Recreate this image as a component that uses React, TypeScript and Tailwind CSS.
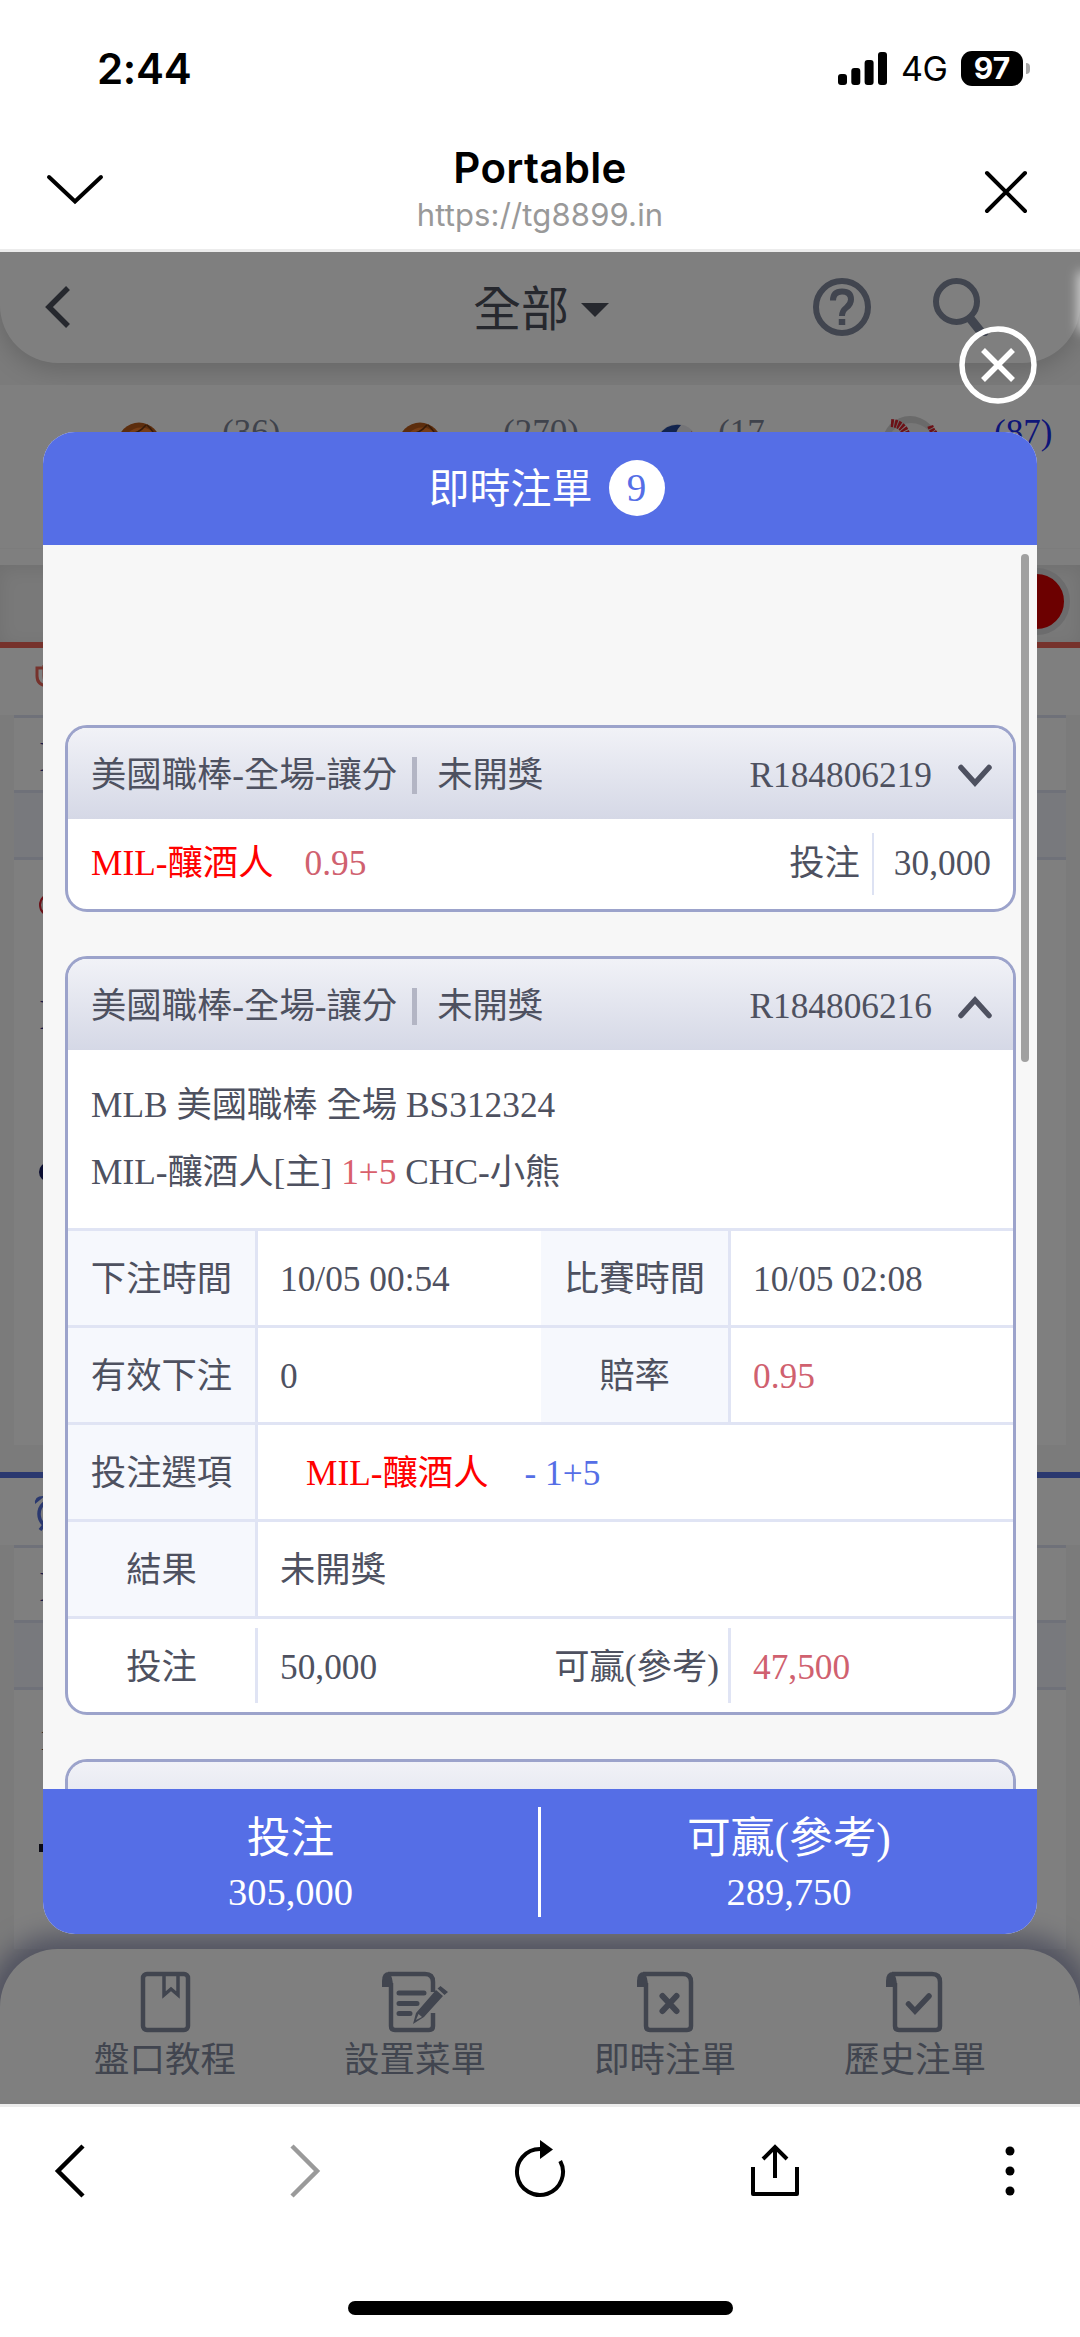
import type { ReactNode } from 'react';
import clsx from 'clsx';

const SERIF = "font-['Liberation_Serif','Noto_Sans_CJK_TC',serif]";
const SANS = "font-['Inter','Noto_Sans_CJK_TC',sans-serif]";

function StatusBar() {
    return (
        <div className="flex h-[137px] items-start justify-between pt-[48px] pr-[50px] pl-[97px]">
            <div className="text-[42px] leading-[42px] font-semibold tracking-[-0.3px]">
                2:44
            </div>
            <div className="flex items-center pt-[3px]">
                <svg className="h-[33px] w-[49px]" viewBox="0 0 49 33">
                    <rect x="0" y="22" width="9" height="11" rx="3" />
                    <rect x="13.3" y="16" width="9" height="17" rx="3" />
                    <rect x="26.6" y="8" width="9" height="25" rx="3" />
                    <rect x="40" y="0" width="9" height="33" rx="3" />
                </svg>
                <span className="ml-[14px] w-[46px] text-[34px] leading-[35px] tracking-[-0.5px]">
                    4G
                </span>
                <div className="ml-[14px] flex h-[35px] w-[62px] items-center justify-center rounded-[11px] bg-black text-[30px] leading-[35px] font-bold text-white">
                    97
                </div>
                <div className="ml-[3px] h-[11px] w-[4px] rounded-r-[4px] bg-[#a8a8a8]" />
            </div>
        </div>
    );
}

function BrowserHeader() {
    return (
        <div className="flex h-[115px] items-start justify-between border-b-[3px] border-[#ececec] px-[45px]">
            <svg
                className="mt-[36px] h-[34px] w-[60px]"
                viewBox="0 0 60 34"
                fill="none"
                stroke="#000"
                strokeWidth="4"
            >
                <path d="M4 4L30 28.500L56 4" strokeLinecap="round" />
            </svg>
            <div className="pt-[7px] text-center">
                <div className="text-[42px] leading-[48px] font-semibold tracking-[0.3px]">
                    Portable
                </div>
                <div className="mt-[6px] text-[31px] leading-[34px] tracking-[0.15px] text-[#999]">
                    https://tg8899.in
                </div>
            </div>
            <svg
                className="mt-[32px] h-[46px] w-[60px]"
                viewBox="0 0 60 46"
                fill="none"
                stroke="#000"
                strokeWidth="4"
                strokeLinecap="round"
            >
                <path d="M12 4L50 42M50 4L12 42" />
            </svg>
        </div>
    );
}

function Basketball() {
    return (
        <svg className="h-[44px] w-[44px]" viewBox="0 0 44 44">
            <circle cx="22" cy="22" r="21.500" fill="#b85a1a" />
            <circle cx="24" cy="24" r="18.500" fill="#ec7a2c" />
            <path
                d="M6 12Q20 14 29 3M30 3Q38 10 40 20"
                fill="none"
                stroke="#6a3410"
                strokeWidth="1.500"
            />
        </svg>
    );
}

function Volleyball() {
    return (
        <svg className="h-[44px] w-[44px]" viewBox="0 0 44 44">
            <circle cx="22" cy="22" r="21" fill="#e8e8ee" />
            <path d="M4 12Q12 0 26 2Q20 8 18 22L2 20Z" fill="#24489c" />
            <path d="M36 8Q44 14 42 28L37 16Z" fill="#d22b34" />
        </svg>
    );
}

function Baseball() {
    return (
        <svg className="h-[56px] w-[56px]" viewBox="0 0 56 56">
            <circle cx="28" cy="28" r="28" fill="#d4d4d4" />
            <circle cx="29" cy="32" r="25" fill="#eee" />
            <path
                d="M9 7Q24 8 25 24"
                fill="none"
                stroke="#d8202c"
                strokeWidth="8"
                strokeDasharray="2.500 1"
            />
            <path
                d="M56 20Q50 16 48 9"
                fill="none"
                stroke="#d8202c"
                strokeWidth="6"
                strokeDasharray="2.500 1"
            />
        </svg>
    );
}

function PageHeader() {
    return (
        <div className="h-[133px] overflow-hidden bg-[#f6f6f6]">
            <div className="flex h-[111px] items-start rounded-b-[58px] bg-white shadow-[0_6px_26px_rgba(0,0,0,0.18)]">
                <svg
                    className="mt-[33px] ml-[42px] h-[44px] w-[30px]"
                    viewBox="0 0 30 44"
                    fill="none"
                    stroke="#4c505c"
                    strokeWidth="5.500"
                >
                    <path d="M26 3L7 22L26 41" />
                </svg>
                <div className="mt-[30px] ml-[401px] flex w-[140px] items-center text-[48px] leading-[56px] text-[#4c505c]">
                    全部
                    <svg className="ml-[12px] h-[14px] w-[28px]" viewBox="0 0 28 14">
                        <path d="M0 0H28L14 14Z" fill="#4c505c" />
                    </svg>
                </div>
                <svg
                    className="mt-[26px] ml-[200px] h-[58px] w-[58px]"
                    viewBox="0 0 58 58"
                    fill="none"
                    stroke="#828a9e"
                >
                    <circle cx="29" cy="29" r="26" strokeWidth="6" />
                    <path
                        d="M20 22.500Q20 13.500 29 13.500Q38 13.500 38 21.500Q38 26 33.500 29.500Q29 33 29 38"
                        strokeWidth="6"
                    />
                    <path d="M29 41V47" strokeWidth="6.500" />
                </svg>
                <svg
                    className="mt-[26px] ml-[62px] h-[58px] w-[58px]"
                    viewBox="0 0 58 58"
                    fill="none"
                    stroke="#828a9e"
                >
                    <circle cx="23.500" cy="23.500" r="20.500" strokeWidth="6" />
                    <path d="M36 39L52 59" strokeWidth="9" />
                </svg>
            </div>
        </div>
    );
}

function SportsRow() {
    return (
        <div className="flex h-[164px] items-start border-b border-[#f9f9f9] bg-white pt-[31px] text-[35px] leading-[34px] text-[#7f8699]">
            <div className="flex w-[398px] pl-[117px]">
                <div className="pt-[6px]">
                    <Basketball />
                </div>
                <span className="ml-[61px]">(36)</span>
            </div>
            <div className="flex w-[257px]">
                <div className="pt-[6px]">
                    <Basketball />
                </div>
                <span className="ml-[61px]">(270)</span>
            </div>
            <div className="flex w-[227px]">
                <div className="pt-[7px]">
                    <Volleyball />
                </div>
                <span className="ml-[19px]">(17</span>
            </div>
            <div className="flex">
                <Baseball />
                <span className="ml-[56px] text-[#1a2bf0]">(87)</span>
            </div>
        </div>
    );
}

function MatchTable({
    className,
    children,
}: {
    className: string;
    children: ReactNode;
}) {
    return (
        <div className={clsx('mx-[14px] bg-white', className)}>
            <div className="h-[78px] border-y-[3px] border-[#dfe2f2] pt-[22px] pl-[25px] text-[42px] leading-[34px] text-[#3a3a90]">
                I
            </div>
            <div className="h-[67px] border-b-[3px] border-[#dfe2f2] bg-[#f0f2fb]" />
            {children}
        </div>
    );
}

function BottomNav() {
    const items: { label: string; icon: ReactNode }[] = [
        {
            label: '盤口教程',
            icon: (
                <svg className="h-[62px] w-[72px]" viewBox="0 0 72 62" fill="none" stroke="currentColor" strokeWidth="4.500">
                    <rect x="14" y="3" width="45" height="56" rx="4" />
                    <path d="M35 4V24L42 18L49 24V4" strokeWidth="3.500" />
                </svg>
            ),
        },
        {
            label: '設置菜單',
            icon: (
                <svg className="h-[62px] w-[72px]" viewBox="0 0 72 62" fill="none" stroke="currentColor" strokeWidth="4.500">
                    <path d="M12 12V55Q12 59 16 59H50Q54 59 54 55V42M54 21V11Q54 3 46 3H9" />
                    <path d="M3 16V10Q3 1 10 1Q14 6 14 16Z" fill="currentColor" stroke="none" />
                    <path d="M20 22H45M20 32.500H38M20 42.500H31" strokeWidth="5" strokeLinecap="round" />
                    <path d="M34 53L37 42L57 19L64 25L45 46ZM58.500 17.500L61.500 15L69 21L65.500 24Z" fill="currentColor" stroke="none" />
                    <path d="M37 49L39.500 43L43 46Z" fill="#fff" stroke="none" />
                </svg>
            ),
        },
        {
            label: '即時注單',
            icon: (
                <svg className="h-[62px] w-[72px]" viewBox="0 0 72 62" fill="none" stroke="currentColor" strokeWidth="4.500">
                    <path d="M17 12V55Q17 59 21 59H58Q62 59 62 55V11Q62 3 54 3H14" />
                    <path d="M8 16V10Q8 1 15 1Q19 6 19 16Z" fill="currentColor" stroke="none" />
                    <path d="M33.500 25L47.500 40M47.500 25L33.500 40" strokeWidth="6" strokeLinecap="round" />
                </svg>
            ),
        },
        {
            label: '歷史注單',
            icon: (
                <svg className="h-[62px] w-[72px]" viewBox="0 0 72 62" fill="none" stroke="currentColor" strokeWidth="4.500">
                    <path d="M16 12V55Q16 59 20 59H57Q61 59 61 55V11Q61 3 53 3H13" />
                    <path d="M7 16V10Q7 1 14 1Q18 6 18 16Z" fill="currentColor" stroke="none" />
                    <path d="M29.500 33L36 40L50 25" strokeWidth="5.500" strokeLinecap="round" />
                </svg>
            ),
        },
    ];

    return (
        <div className="relative flex h-[155px] shrink-0 rounded-t-[58px] bg-white px-[40px] pt-[22px] text-[#828a9e] shadow-[0_0_24px_14px_rgba(80,85,140,0.5)]">
            {items.map((item) => (
                <div key={item.label} className="flex w-[250px] flex-col items-center">
                    {item.icon}
                    <span className="mt-[6px] text-[35.5px] leading-[42px]">
                        {item.label}
                    </span>
                </div>
            ))}
        </div>
    );
}

function SportsPage() {
    return (
        <div className="flex h-full flex-col overflow-hidden bg-[#f6f6f6]">
            <PageHeader />
            <SportsRow />
            <div className="h-[16px] bg-white" />
            <div className="flex h-[77px] justify-end bg-[#f2f2f2] shadow-[inset_0_4px_18px_rgba(0,0,0,0.08)]">
                <div className="mt-[3px] mr-[10px] h-[67px] w-[67px] rounded-full border-[6px] border-[#d8d8da] bg-[#d80000]" />
            </div>
            <div className="h-[6px] shrink-0 bg-[#ec6459]" />
            <div className="flex h-[67px] shrink-0 bg-white pt-[16px] pl-[34px]">
                <svg className="h-[26px] w-[30px]" viewBox="0 0 30 26" fill="none" stroke="#ec6459" strokeWidth="3">
                    <path d="M10 4H3V12Q3 21 13 22M10 1V12Q10 18 14 19" />
                </svg>
            </div>
            <MatchTable className="h-[730px] shrink-0">
                <div className="pt-[33px] pl-[25px]">
                    <div className="h-[24px] w-[24px] rounded-full border-2 border-[#d8202c] bg-[#eee]" />
                    <div className="mt-[77px] text-[42px] leading-[42px] text-[#3a3a90]">I</div>
                    <div className="mt-[126px] h-[20px] w-[20px] rounded-full bg-[#151a60]" />
                </div>
            </MatchTable>
            <div className="h-[27px] shrink-0" />
            <div className="h-[6px] shrink-0 bg-[#5470de]" />
            <div className="flex h-[67px] shrink-0 bg-white pt-[16px] pl-[34px]">
                <svg className="h-[38px] w-[36px]" viewBox="0 0 36 38" fill="none" stroke="#5470de" strokeWidth="3.500">
                    <circle cx="19" cy="20" r="14" />
                    <path d="M11 30L6 36" />
                    <path d="M1 10Q0 1 11 2Z" fill="#5470de" stroke="none" />
                </svg>
            </div>
            <MatchTable className="min-h-0 flex-1">
                <div className="pt-[32px] pl-[25px] text-[32px] leading-[34px] text-[#333]">
                    1
                    <div className="mt-[88px] h-[8px] w-[20px] bg-[#15152a]" />
                </div>
            </MatchTable>
            <BottomNav />
        </div>
    );
}

function TicketHeader({ id, open }: { id: string; open?: boolean }) {
    return (
        <div className="flex h-[91px] items-center bg-linear-to-b from-[#f1f2f7] to-[#d5d8e6] pt-[4px] pr-[21px] pl-[23px]">
            <span>美國職棒-全場-讓分</span>
            <span className="ml-[15px] h-[37px] w-[5px] bg-[#b3b5c4]" />
            <span className="ml-[20px]">未開獎</span>
            <span className="ml-auto">{id}</span>
            <svg
                className={clsx('ml-[26px] h-[26px] w-[34px]', open && 'rotate-180')}
                viewBox="0 0 34 26"
                fill="none"
                stroke="#4e5160"
                strokeWidth="5.500"
            >
                <path d="M3 4.500L17 20L31 4.500" strokeLinecap="round" />
            </svg>
        </div>
    );
}

function Ticket({ children }: { children: ReactNode }) {
    return (
        <div className="shrink-0 overflow-hidden rounded-[22px] border-[3px] border-[#9ca3cb] bg-white">
            {children}
        </div>
    );
}

function Label({ children }: { children: ReactNode }) {
    return (
        <div className="flex w-[190px] shrink-0 items-center justify-center border-r-[3px] border-[#e0e4f4] bg-[#f6f8fd] pt-[4px] whitespace-nowrap">
            {children}
        </div>
    );
}

function Value({ className, children }: { className?: string; children: ReactNode }) {
    return (
        <div className={clsx('flex items-center pt-[4px] pl-[22px]', className)}>
            {children}
        </div>
    );
}

function Row({ children }: { children: ReactNode }) {
    return (
        <div className="flex h-[97px] border-t-[3px] border-[#e0e4f4]">{children}</div>
    );
}

function BetsModal() {
    return (
        <div className="absolute top-[180px] left-[43px] flex h-[1502px] w-[994px] flex-col overflow-hidden rounded-[32px] bg-[#f7f7f7]">
            <div className="flex h-[113px] shrink-0 items-center justify-center bg-[#556ee6] pl-[13px] text-[41px] text-white">
                <span className="pt-[2px]">即時注單</span>
                <span className="mb-[2px] ml-[16px] flex h-[56px] w-[56px] items-center justify-center rounded-full bg-white text-[39px] leading-[56px] text-[#556ee6]">
                    9
                </span>
            </div>

            <div className="relative flex min-h-0 flex-1 flex-col gap-[44px] overflow-hidden pt-[180px] pr-[21px] pl-[22px] text-[35.35px] leading-[48px] text-[#4e5160]">
                <Ticket>
                    <TicketHeader id="R184806219" />
                    <div className="flex h-[90px] items-center pr-[22px] pl-[23px]">
                        <span className="text-[#ff0000]">MIL-釀酒人</span>
                        <span className="ml-[31px] text-[#d0616f]">0.95</span>
                        <span className="ml-auto">投注</span>
                        <span className="ml-[12px] h-[62px] w-[2px] bg-[#dde2f3]" />
                        <span className="ml-[20px]">30,000</span>
                    </div>
                </Ticket>

                <Ticket>
                    <TicketHeader id="R184806216" open />
                    <div className="h-[178px] pt-[22px] pl-[23px] leading-[67px]">
                        <div>MLB 美國職棒 全場 BS312324</div>
                        <div>
                            MIL-釀酒人[主] <span className="text-[#d9606c]">1+5</span> CHC-小熊
                        </div>
                    </div>
                    <Row>
                        <Label>下注時間</Label>
                        <Value className="w-[283px]">10/05 00:54</Value>
                        <Label>比賽時間</Label>
                        <Value>10/05 02:08</Value>
                    </Row>
                    <Row>
                        <Label>有效下注</Label>
                        <Value className="w-[283px]">0</Value>
                        <Label>賠率</Label>
                        <Value className="text-[#d0616f]">0.95</Value>
                    </Row>
                    <Row>
                        <Label>投注選項</Label>
                        <Value>
                            <span className="ml-[26px] text-[#ff0000]">MIL-釀酒人</span>
                            <span className="ml-[36px] text-[#556ee6]">- 1+5</span>
                        </Value>
                    </Row>
                    <Row>
                        <Label>結果</Label>
                        <Value>未開獎</Value>
                    </Row>
                    <div className="flex h-[96px] items-center border-t-[3px] border-[#e0e4f4]">
                        <div className="flex h-[75px] w-[190px] items-center justify-center border-r-[3px] border-[#e0e4f4] pt-[4px]">
                            投注
                        </div>
                        <Value className="w-[263px]">50,000</Value>
                        <div className="flex h-[75px] w-[210px] items-center justify-end border-r-[3px] border-[#e0e4f4] pt-[4px] pr-[9px] whitespace-nowrap">
                            可贏(參考)
                        </div>
                        <Value className="text-[#d0616f]">47,500</Value>
                    </div>
                </Ticket>

                <Ticket>
                    <div className="h-[91px] bg-linear-to-b from-[#f1f2f7] to-[#d5d8e6]" />
                </Ticket>

                <div className="absolute top-[9px] right-[8px] h-[508px] w-[8px] rounded-full bg-[#a0a0a0]" />
            </div>

            <div className="flex h-[145px] shrink-0 items-center bg-[#556ee6] text-center text-white">
                <div className="w-[495px]">
                    <div className="text-[43.7px] leading-[60px]">投注</div>
                    <div className="text-[38.5px] leading-[48px]">305,000</div>
                </div>
                <div className="h-[110px] w-[3px] bg-white" />
                <div className="flex-1">
                    <div className="text-[43.7px] leading-[60px]">可贏(參考)</div>
                    <div className="text-[38.5px] leading-[48px]">289,750</div>
                </div>
            </div>
        </div>
    );
}

function Toolbar() {
    return (
        <div className="flex h-[233px] shrink-0 flex-col border-t-[3px] border-[#ececec]">
            <div className="flex items-start justify-between px-[43px] pt-[28px]">
                <svg className="mt-[7px] h-[58px] w-[54px]" viewBox="0 0 54 58" fill="none" stroke="#000" strokeWidth="4.500">
                    <path d="M40 4L15 29L40 54" />
                </svg>
                <svg className="mt-[7px] h-[58px] w-[54px]" viewBox="0 0 54 58" fill="none" stroke="#9a9a9a" strokeWidth="4.500">
                    <path d="M14 4L39 29L14 54" />
                </svg>
                <svg className="mt-[2px] h-[64px] w-[54px]" viewBox="0 0 54 64" fill="none" stroke="#000" strokeWidth="4">
                    <path d="M27 12A23 23 0 1 0 47.200 24" />
                    <path d="M27 3L40 12.500L27 22Z" fill="#000" stroke="none" />
                </svg>
                <svg className="mt-[7px] h-[58px] w-[54px]" viewBox="0 0 54 58" fill="none" stroke="#000" strokeWidth="4">
                    <path d="M5 25V52H49V25" strokeLinejoin="round" />
                    <path d="M27 36V5M15 17L27 5L39 17" />
                </svg>
                <svg className="mt-[10px] h-[52px] w-[54px]" viewBox="0 0 54 52">
                    <circle cx="27" cy="6" r="4.500" />
                    <circle cx="27" cy="26" r="4.500" />
                    <circle cx="27" cy="46" r="4.500" />
                </svg>
            </div>
            <div className="mx-auto mt-auto mb-[22px] h-[14px] w-[385px] rounded-full bg-black" />
        </div>
    );
}

export default function App() {
    return (
        <div className={clsx('flex h-[2337px] w-[1080px] flex-col overflow-hidden bg-white text-black', SANS)}>
            <StatusBar />
            <BrowserHeader />
            <div className={clsx('relative h-[1852px] shrink-0 overflow-hidden', SERIF)}>
                <SportsPage />
                <div className="absolute inset-0 bg-black/50" />
                <div className="absolute top-[22px] -right-[8px] h-[56px] w-[8px] shadow-[0_0_12px_2px_rgba(255,255,255,0.7)]" />
                <BetsModal />
                <svg
                    className="absolute top-[73px] left-[958px] h-[80px] w-[80px]"
                    viewBox="0 0 80 80"
                    fill="none"
                    stroke="#fff"
                    strokeWidth="5.500"
                >
                    <circle cx="40" cy="40" r="36" />
                    <path d="M25 25L55 55M55 25L25 55" />
                </svg>
            </div>
            <Toolbar />
        </div>
    );
}
